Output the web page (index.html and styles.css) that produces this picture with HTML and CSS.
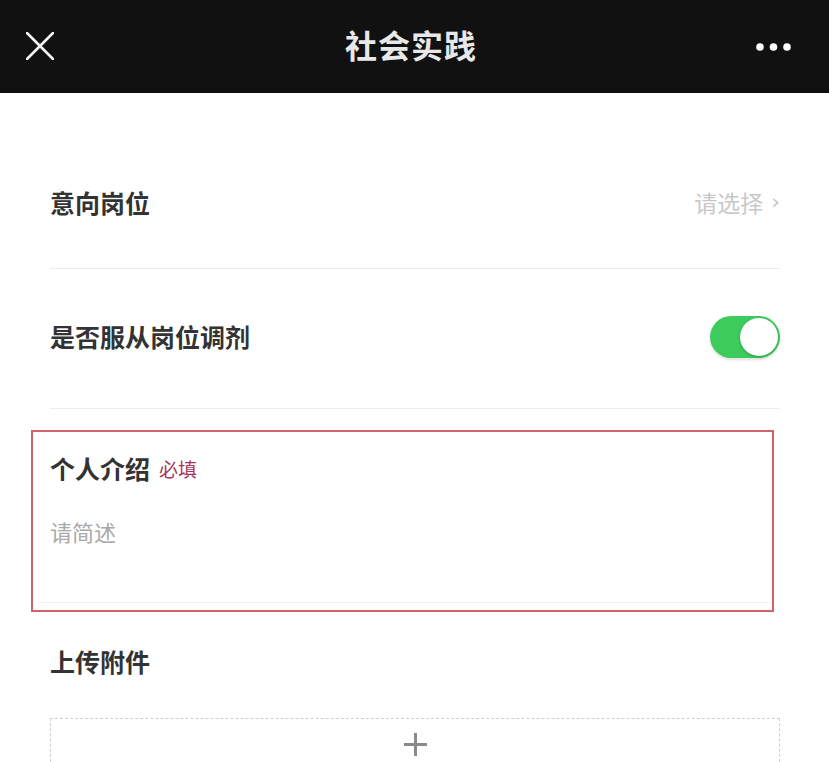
FILE: index.html
```html
<!DOCTYPE html>
<html lang="zh-CN">
<head>
<meta charset="utf-8">
<title>社会实践</title>
<link rel="stylesheet" href="styles.css">
</head>
<body>
<header class="topbar">
  <span class="icon-close">
    <svg width="28" height="28" viewBox="0 0 28 28"><path d="M1 1L27 27M27 1L1 27" stroke="#f2f2f2" stroke-width="2.6" stroke-linecap="round"/></svg>
  </span>
  <h1 class="title">社会实践</h1>
  <span class="icon-more">
    <svg width="36" height="10" viewBox="0 0 36 10"><circle cx="4" cy="5" r="3.8" fill="#fff"/><circle cx="17.5" cy="5" r="3.8" fill="#fff"/><circle cx="31" cy="5" r="3.8" fill="#fff"/></svg>
  </span>
</header>
<main class="form">
  <div class="row row-first">
    <span class="label">意向岗位</span>
    <span class="picker">请选择 <span class="chev">›</span></span>
  </div>
  <div class="row row-second">
    <span class="label">是否服从岗位调剂</span>
    <span class="switch"><span class="knob"></span></span>
  </div>
  <section class="intro">
    <div class="intro-title"><span class="label">个人介绍</span><span class="required">必填</span></div>
    <div class="placeholder">请简述</div>
    <div class="intro-line"></div>
  </section>
  <div class="upload-title"><span class="label">上传附件</span></div>
  <div class="upload-box"><span class="plus"></span></div>
</main>
</body>
</html>
```
FILE: styles.css
```css
* { box-sizing: border-box; }
html, body { margin: 0; padding: 0; background: #fff; }
body {
  width: 829px;
  height: 762px;
  overflow: hidden;
  font-family: "Noto Sans CJK SC", "Noto Sans", sans-serif;
  color: #333;
}
.topbar {
  height: 93px;
  background: #111;
  display: flex;
  align-items: center;
  justify-content: space-between;
  padding: 0 37px 0 26px;
}
.icon-close { display: flex; width: 28px; height: 28px; margin-top: -1px; }
.icon-more { display: flex; width: 36px; height: 10px; }
.title {
  margin: -5px 0 0 12px;
  font-size: 32px;
  font-weight: 700;
  color: #e8e8e8;
  letter-spacing: 1px;
  line-height: 40px;
}
.form { padding: 0 49px 0 50px; }
.row {
  display: flex;
  align-items: center;
  justify-content: space-between;
  height: 40px;
  box-sizing: content-box;
  border-bottom: 1px solid #ececec;
}
.row-first { padding: 89px 0 46px; }
.row-second { padding: 47px 0 52px; }
.label {
  font-size: 25px;
  font-weight: 700;
  color: #333;
  line-height: 40px;
}
.picker {
  font-size: 23px;
  color: #c8c8c8;
  line-height: 40px;
  display: flex;
  align-items: center;
  gap: 8px;
}
.chev { font-size: 22px; color: #c8c8c8; font-family: "DejaVu Sans", sans-serif; }
.switch {
  width: 70px;
  height: 42px;
  border-radius: 21px;
  background: #3ccb5c;
  display: flex;
  align-items: center;
  justify-content: flex-end;
  padding: 2px;
  margin-top: 2px;
  box-shadow: 0 2px 3px rgba(0,0,0,0.12);
}
.knob {
  width: 38px;
  height: 38px;
  border-radius: 50%;
  background: #fff;
  box-shadow: 0 1px 3px rgba(0,0,0,0.25);
}
.intro {
  margin: 21px 6px 0 -19px;
  border: 2px solid #d0636a;
  padding: 16px 2px 7px 17px;
}
.intro-title { display: flex; align-items: center; gap: 9px; height: 40px; }
.required { font-size: 19px; color: #a8345a; line-height: 40px; margin-top: 2px; }
.placeholder {
  margin-top: 27px;
  font-size: 22px;
  line-height: 32px;
  color: #a9a9a9;
}
.intro-line {
  margin: 55px 0 0 -12px;
  height: 1px;
  background: #f0f0f0;
}
.upload-title { margin-top: 29px; height: 40px; display: flex; align-items: center; }
.upload-box {
  margin-top: 37px;
  height: 44px;
  border: 1px dashed #cfcfcf;
  border-bottom: none;
  display: flex;
  justify-content: center;
  padding-top: 14px;
}
.plus {
  position: relative;
  width: 23px;
  height: 23px;
  display: block;
}
.plus::before, .plus::after {
  content: "";
  position: absolute;
  background: #8a8a8a;
}
.plus::before { left: 0; right: 0; top: 10px; height: 3px; }
.plus::after { top: 0; bottom: 0; left: 10px; width: 3px; }
```
